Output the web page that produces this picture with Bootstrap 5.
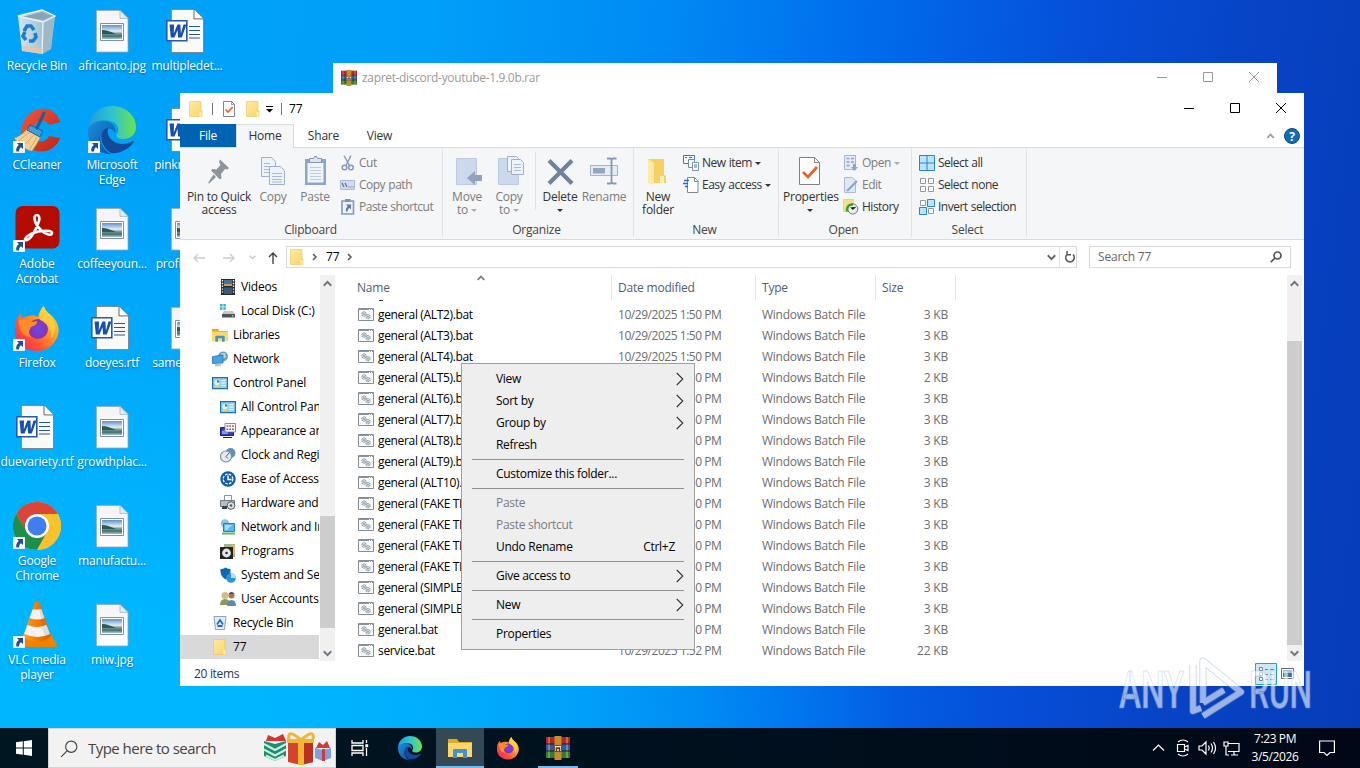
<!DOCTYPE html>
<html lang="en">
<head>
  <meta charset="UTF-8">
  <title>77</title>
  <meta name="viewport" content="width=device-width, initial-scale=1">
  <link href="https://cdn.jsdelivr.net/npm/bootstrap@5.3.3/dist/css/bootstrap.min.css" rel="stylesheet">
  <style>
    body {
      width: 1360px; height: 768px; overflow: hidden; cursor: default;
      font-family: "Open Sans", "Noto Sans", sans-serif; font-size: 12px; line-height: 15px; letter-spacing: -.2px;
      color: #000;
      background: radial-gradient(ellipse 900px 600px at 0 100%, #00b6ff 30%, #00b6ff00),
        linear-gradient(97deg, #00a4f8 0, #009ff9 30%, #008af4 46%, #006cec 60%, #0650da 74%, #0744c6 86%, #063cb8 100%);
    }
    svg { display: block; flex: none; overflow: visible; }

    /* desktop */
    .desk { display: grid; grid-template-rows: repeat(7, 99px); grid-auto-columns: 75px; grid-auto-flow: column; height: 728px; }
    .desk-item { padding: 7px 1px 0 0; color: #fff; text-align: center; text-shadow: 0 1px 2px #0369; white-space: nowrap; letter-spacing: -.19px; }
    .desk-item svg { margin: 0 auto 3px; }

    /* windows */
    .win { position: absolute; background: #fff; }
    .win-rar { left: 333px; top: 63px; width: 944px; height: 40px; color: #999; letter-spacing: -.33px; }
    .win-rar .titlebar { height: 29px; }
    .win-main { left: 180px; top: 93px; width: 1124px; height: 593px; }
    .titlebar { height: 31px; }
    .cap { width: 46px; padding: 0 1px 1px 0; }
    .tabs { height: 23px; border-bottom: 1px solid #dadbdc; box-sizing: content-box; }
    .tab-i { height: 24px; line-height: 24px; text-align: center; color: #333; }
    .tab-file { width: 56px; background: #0063b1; color: #fff; height: 23px; }
    .tab-home { width: 58px; background: #f5f6f7; border: 1px solid #dadbdc; border-bottom: 0; line-height: 22px; }
    .ribbon { height: 92px; background: #f5f6f7; border-bottom: 1px solid #dadbdc; color: #333; }
    .rgroup { border-right: 1px solid #e2e3e4; padding-top: 4px; margin-bottom: 2px; }
    .rbody { height: 70px; }
    .rlabel { text-align: center; color: #444; }
    .big { text-align: center; line-height: 13px; padding-top: 3px; white-space: nowrap; letter-spacing: -.24px; }
    .big svg { margin: 0 auto 3px; }
    .small-row { height: 22px; white-space: nowrap; letter-spacing: -.5px; word-spacing: .6px; }
    .small-row span { padding: 0 0 1px 3px; }
    .dis { color: #7c7c7c; }
    .caret { display: inline-block; border: 3px solid transparent; border-top-color: currentColor; border-bottom: 0; vertical-align: 2px; }
    .small-row .caret { margin-left: 3px; }
    .dis .caret { opacity: .6; }
    .rsep { width: 1px; background: #e0e1e2; height: 58px; }
    .addr { height: 35px; }
    .fieldbox { height: 22px; border: 1px solid #d9d9d9; margin-top: 6px; color: #666; }
    .fieldbox > span:first-child { padding-bottom: 1px; }
    .panes { height: 386px; }
    .tree { width: 139px; margin-right: 1px; overflow: hidden; }
    .tree-row { height: 24px; white-space: nowrap; padding-left: 32px; }
    .tree-row span { padding: 0 0 1px 5px; }
    .tree-row.sub { padding-left: 40px; }
    .tree-row.sel { background: #d9d9d9; }
    .sbar { width: 15px; background: #f0f0f0; }
    .thumb { background: #cdcdcd; width: 15px; }
    .files { width: 952px; overflow: hidden; }
    .fhead { height: 25px; color: #4c607a; padding-left: 20px; position: relative; }
    .fhead > div { border-right: 1px solid #e5e5e5; line-height: 25px; }
    .sortmark { position: absolute; left: 142px; top: 0; color: #777; }
    .frow { height: 21px; white-space: nowrap; color: #6d6d6d; padding-left: 20px; }
    .c-name { width: 257px; padding-left: 2px; }
    .c-date { width: 144px; padding-left: 6px; }
    .c-type { width: 120px; padding-left: 6px; }
    .c-size { width: 80px; padding-left: 6px; }
    .frow .c-size { text-align: right; padding-right: 8px; }
    .frow .c-date { letter-spacing: -.46px; }
    .frow .c-type { letter-spacing: -.27px; }
    .frow .c-name { color: #000; padding-left: 3px; letter-spacing: -.34px; }
    .above { height: 4px; }
    .above i { display: block; width: 4px; height: 1px; background: #333; margin-left: 44px; }
    .status { height: 25px; color: #1e395b; letter-spacing: -.32px; }

    /* context menu */
    .ctx { position: absolute; left: 461px; top: 363px; width: 234px; height: 287px; background: #eee; border: 1px solid #a0a0a0; padding: 4px 10px 0; letter-spacing: -.29px; }
    .ctx-i { height: 22px; padding: 0 0 1px 24px; }
    .ctx-s { height: 7px; padding-top: 3px; }
    .ctx-s i { display: block; height: 1px; background: #919191; }

    /* taskbar */
    .task { position: absolute; left: 0; top: 728px; width: 1360px; height: 40px; background: linear-gradient(90deg, #001722, #000f1d 60%, #000817); color: #fff; }
    .tsearch { width: 288px; height: 40px; background: #f2f2f2; border: 1px solid #cfd4d6; color: #444; font-size: 15px; letter-spacing: -.53px; }
    .tbtn { width: 48px; height: 40px; }
    .tbtn.on { background: #334a56; }
    .tbtn.run { border-bottom: 2px solid #76b9ed; padding-top: 2px; }
    .clock { width: 62px; line-height: 18px; letter-spacing: -.4px; }
    .mark-any { position: absolute; left: 1115px; top: 652px; }
  </style>
</head>
<body>
  <svg width="0" height="0" class="position-absolute">
    <defs>
      <linearGradient id="gPage" x2="0" y2="1"><stop stop-color="#f4f4f4"/><stop offset="1" stop-color="#fdfdfd"/></linearGradient>
      <linearGradient id="gSky" x2="0" y2="1"><stop stop-color="#5d90cc"/><stop offset=".45" stop-color="#e4eff2"/><stop offset=".6" stop-color="#7b9f98"/><stop offset=".8" stop-color="#406e74"/><stop offset="1" stop-color="#a9c6d0"/></linearGradient>
      <linearGradient id="gFold" x2="1" y2="1"><stop stop-color="#ffe9a2"/><stop offset="1" stop-color="#f9d568"/></linearGradient>
      <linearGradient id="gEdge1" x2="1"><stop stop-color="#1d9fd8"/><stop offset=".5" stop-color="#2fc3d0"/><stop offset="1" stop-color="#6be34a"/></linearGradient>
      <linearGradient id="gEdge2" x2="1" y2="1"><stop stop-color="#1b8fe0"/><stop offset="1" stop-color="#0b4fa0"/></linearGradient>
      <linearGradient id="gFox" x1="1" x2="0" y2="1"><stop stop-color="#fff04a"/><stop offset=".4" stop-color="#ff9a24"/><stop offset=".7" stop-color="#ff4d38"/><stop offset="1" stop-color="#e8168b"/></linearGradient>
      <radialGradient id="gFoxIn"><stop stop-color="#6a4be0"/><stop offset="1" stop-color="#8c2fb8"/></radialGradient>
      <linearGradient id="gCone" x2="1"><stop stop-color="#ffa12b"/><stop offset=".5" stop-color="#f47b00"/><stop offset="1" stop-color="#d95f00"/></linearGradient>
      <linearGradient id="gBin" x2="1"><stop stop-color="#dfe9ef"/><stop offset=".55" stop-color="#b5cbd8"/><stop offset="1" stop-color="#8facbf"/></linearGradient>
      <linearGradient id="gRed" x2="1" y2="1"><stop stop-color="#f0583c"/><stop offset="1" stop-color="#bd2414"/></linearGradient>
    </defs>
    <symbol id="link" viewBox="0 0 12 12"><path fill="#fff" stroke="#b7c6d0" stroke-width=".6" d="M0 0h12v12H0z"/><path fill="#1c4f96" d="M4 2h6v6L8 6.200C6.500 7.200 6 8.500 6.200 10.500H3.400C2.600 8 3.700 5.500 5.900 4z"/></symbol>
    <symbol id="bin" viewBox="0 0 48 48"><path fill="url(#gBin)" d="M5 9l24-6 13 6-4 33-9 5-20-3z" opacity=".95"/><path fill="#9db9c8" d="M30 15l12-6-4 33-9 5z"/><path fill="#8aa5b2" d="M8 10l21-5 9 4-8 4z"/><path fill="none" stroke="#eaf3f7" stroke-width="1.300" d="M5 9l24-6 13 6-12 6zM30 15l-1 32"/><path fill="#e8c4a8" d="M10 39l19 2v6l-19-3z" opacity=".8"/><g fill="none" stroke="#1b7fd0" stroke-width="3.600"><path d="M11 24l3-5h4l3 4"/><path d="M22 26l1 4-3 4h-4"/><path d="M13 33l-3-4 2-4"/></g></symbol>
    <symbol id="jpg" viewBox="0 0 48 48"><path fill="url(#gPage)" stroke="#9aa3a8" stroke-width=".8" d="M8.400 3.400H32l8 8V45H8.400z"/><path fill="#e3eef4" stroke="#9fb3c0" stroke-width=".8" d="M32 3.400v8h8z"/><path fill="#fff" stroke="#7c8fb0" d="M12.500 16.500h23v17h-23z"/><path fill="url(#gSky)" d="M14 18h20v14H14z"/><path fill="#2e5a55" d="M14 23c5 0 9 2 14 4H14z"/></symbol>
    <symbol id="doc" viewBox="0 0 48 48"><path fill="#fafafa" stroke="#777" stroke-width=".8" d="M8.400 2.400H31l9.500 9.500V45.500H8.400z"/><path fill="#fff" stroke="#555" stroke-width=".9" d="M31 2.400v9.500h9.500"/><path stroke="#2a5699" stroke-width="1.200" d="M26 19.500h11M26 23.500h11M26 27.500h11M26 31h11"/><path fill="#fff" stroke="#2459ac" stroke-width="1.600" d="M3.800 13.800h20v20h-20z"/><path fill="#174fae" d="M6.500 17.500h4.500l-.2 9 3.600-9h3l.5 9 2.600-9h3l-4.700 13h-3.700l-.6-7.500-3 7.500H7.800z"/></symbol>
    <symbol id="ccl" viewBox="0 0 48 48"><path fill="url(#gRed)" d="M47 16l-11 3c-3-5-9-6-13-2-6 6-4 17 3 18 5 1 8-1 10-5l11 2C43 43 33 47 23 45 11 42 6 32 9 20 12 8 22 1 33 3c7 1 12 6 14 13z"/><path fill="#f3cf96" stroke="#b98c4e" stroke-width=".6" d="M15 22l13 8c-3 6-6 11-9 15C12 44 6 38 1 32c5-1 10-5 14-10z"/><path stroke="#c79a5a" stroke-width=".7" d="M17 26L5 35M21 29l-10 10M24 31l-7 12"/><path fill="#3d9fdc" stroke="#1c5d94" d="M17 19l13 6-3 6-13-7z"/><path stroke="#255b91" stroke-width="3" stroke-linecap="round" d="M24 22l7-15"/></symbol>
    <symbol id="edge" viewBox="0 0 48 48"><path fill="url(#gEdge1)" d="M0 22C2 8 12 0 24 0c14 0 24 10 24 21 0 8-6 12-13 12-5 0-8-2-6-5 3-4 1-12-7-13C12 13 3 18 0 24z"/><path fill="url(#gEdge2)" d="M0 23c4-8 16-11 23-6 4 3 5 6 4 10-2-5-9-6-12-1-5 8 0 18 8 22C10 48-1 38 0 23z"/><path fill="#14489a" d="M14 27c1-3 4-5 6-5-2 8 4 15 13 16 5 0 8-1 12-3 1 0 1 1 1 1-6 8-15 12-23 11-7-4-11-12-9-20z"/></symbol>
    <symbol id="pdf" viewBox="0 0 48 48"><rect x="2.500" y="1" width="44" height="42.500" rx="7" fill="#b30b00"/><path fill="none" stroke="#fff" stroke-width="2.600" stroke-linejoin="round" d="M24 10c-5 0-2 10 4 15 5 5 11 6 11 3 0-4-17-2-23 2-5 3-5 6-2 5 4-1 10-12 12-19 1-3 0-6-2-6z"/></symbol>
    <symbol id="fox" viewBox="0 0 48 48"><path fill="url(#gFox)" d="M3 17c1-3 3-6 5-7l1 4c2-1 4-2 7-2 3-1 7 0 9 1 1-5 3-9 6-11 1 5 5 7 8 10 5 5 8 12 6 19-3 10-11 16-21 16C11 47 1 38 2 26c0-3 0-6 1-9z"/><circle cx="25" cy="25" r="10" fill="url(#gFoxIn)"/><path fill="#ff8b2b" d="M6 16c5-2 11 0 13 2l5-1c1 3-3 5-6 6-2 3-3 7 0 10C9 33 5 24 6 16z"/><path fill="#ffd43e" d="M31 2c0 5 8 9 10 17 2 6 0 12-3 16 1-9-3-15-11-19-1-6 1-11 4-14z" opacity=".75"/></symbol>
    <symbol id="chrome" viewBox="0 0 48 48"><circle cx="24" cy="24" r="24" fill="#f8c22e"/><path fill="#dc4437" d="M3.200 12A24 24 0 0 1 44.800 12H24L14 30z"/><path fill="#1e8e4a" d="M3.200 12A24 24 0 0 0 24 48l10-18-10-6-10 6z"/><path fill="#f8c22e" d="M24 48A24 24 0 0 0 44.800 12H24l10.400 18z"/><circle cx="24" cy="24" r="12" fill="#fff"/><circle cx="24" cy="24" r="9.500" fill="#3f7df0"/></symbol>
    <symbol id="vlc" viewBox="0 0 48 48"><path fill="#f08200" d="M10 33h28l6 11q.5 2-2 2H6q-3 0-2-2z"/><path fill="url(#gCone)" d="M22 1q2-1 4 0l12 34q-6 6-14 6t-14-6z"/><path fill="#f3f3f3" d="M19.600 8.500h8.800l3 8.500q-7 3-14.800 0zM14.500 24q9 4 19 0l3.300 9q-12 6-25.600 0z"/><path fill="#ccc" opacity=".6" d="M26 8.500h2.400l3 8.500-3 1zM29 25.500l4.500-1.500 3.300 9-5 2z"/></symbol>
    <symbol id="rar" viewBox="0 0 24 24"><path fill="#b3242c" d="M0 1h24v7H0z"/><path fill="#3157a6" d="M0 8h24v7H0z"/><path fill="#2e7d32" d="M0 15h24v7H0z"/><path stroke="#e8c869" stroke-width="1.200" d="M3 1v21M21 1v21" opacity=".7"/><path stroke="#1a1a1a" stroke-width="1" d="M0 8h24M0 15h24"/><path fill="#c98a2b" d="M8.500 0h7v24h-7z"/><path fill="#f4efe2" stroke="#6b4b1f" d="M8.500 9.500h7v6h-7z"/><path fill="none" stroke="#4a3412" stroke-width="1.500" d="M10.500 15v-3h3v3"/></symbol>
    <symbol id="fold" viewBox="0 0 16 16"><path fill="url(#gFold)" stroke="#e8c25a" stroke-width=".6" d="M1.500.5h11.500v9.500h1v5.500H1.500z"/><path fill="#ffeeb4" d="M11.500 11h2v4.500h-2z"/></symbol>
    <symbol id="libs" viewBox="0 0 24 24"><path fill="#e5a823" d="M0 3h9l2 3h13v4H0z"/><path fill="#ffd767" d="M0 7h24v14H0z"/><path fill="#3f93d5" d="M5 22v-8q0-1 1-1h12q1 0 1 1v8h-4v-5H9v5z"/></symbol>
    <symbol id="props" viewBox="0 0 16 16"><path fill="#fff" stroke="#777" stroke-width=".9" d="M2.500.5h8l3 3v12h-11z"/><path fill="none" stroke="#777" stroke-width=".7" d="M10.500.5v3h3"/><path fill="none" stroke="#e8622c" stroke-width="1.700" d="M4.500 8.500l2.500 2.500 4.700-5"/></symbol>
    <symbol id="bigprops" viewBox="0 0 32 32"><path fill="#fff" stroke="#808080" d="M5.500 2.500h15l5 5v22h-20z"/><path fill="none" stroke="#808080" d="M20.500 2.500v5h5"/><path fill="none" stroke="#e8622c" stroke-width="2.800" d="M9 17l5 5 9-10"/></symbol>
    <symbol id="pin" viewBox="0 0 32 32"><g transform="translate(1 3)" fill="#8d959c"><path d="M16 1.500l9 8.500-1.500 1.500-2.500-.5-4 5 .5 4-1.500 1.500L7 12.500l1.500-1.500 4 .5 4-4.500-1.500-3z"/><path d="M9.500 16.500l2.500 2.500-7 6.500-1-.5z"/></g></symbol>
    <symbol id="copy" viewBox="0 0 32 32"><g fill="#eef2f9" stroke="#9db0cf"><path d="M4.500 2.500h10l4 4v15h-14z"/><path d="M12.500 11.500h11l4 4v14h-15z"/></g><path stroke="#a9bad6" d="M7 8.500h6M7 11.500h5M7 14.500h5M7 17.500h5M15 18.500h10M15 21.500h10M15 24.500h10M15 27h10"/></symbol>
    <symbol id="paste" viewBox="0 0 32 32"><path fill="#8ea5ca" d="M6 4h21v26H6z"/><path fill="#eff3fa" d="M8.500 8h16v19.500h-16z"/><path fill="#dce3ef" stroke="#8095b9" d="M10.500 7.500v-4h4l1-2h2l1 2h4v4z"/><path stroke="#bccae2" d="M11 12.500h11M11 15.500h11M11 18.500h11M11 21.500h11M11 24.500h11"/></symbol>
    <symbol id="cut" viewBox="0 0 16 16"><g fill="none" stroke="#8499bd"><path stroke-width="1.400" d="M4 .5l5.500 10M11 .5l-5 10"/><circle cx="4.500" cy="12.500" r="2.300" stroke-width="1.500"/><circle cx="11" cy="12.500" r="2.300" stroke-width="1.500"/></g></symbol>
    <symbol id="cpath" viewBox="0 0 16 16"><path fill="#cfdaec" stroke="#aabddb" d="M.5 3.500h14v9H.5z"/><path fill="none" stroke="#5c7299" stroke-width="1.200" d="M2 6l2 4M5 6l2 4M8.500 10h1M10.500 10h1M12.500 10h1"/></symbol>
    <symbol id="pshort" viewBox="0 0 16 16"><path fill="#f0f4fa" stroke="#8098c4" stroke-width="1.600" d="M2 2h11.500v13H2z"/><path fill="#7e93b5" d="M5 0h5.500v3H5z"/><path fill="#5577b8" d="M6 5.500h5v5L9.400 9c-1.500.8-1.800 2-1.700 3.500H6c-.5-2 .1-3.700 1.700-5z"/></symbol>
    <symbol id="moveto" viewBox="0 0 32 32"><path fill="#ccd8ec" stroke="#bccae3" d="M5.500 3.500h20v26h-20z"/><path fill="#92a2ba" d="M31 20v6h-7v4l-8-7 8-7v4z"/></symbol>
    <symbol id="copyto" viewBox="0 0 32 32"><path fill="#ccd8ec" stroke="#bccae3" d="M5.500 3.500h20v26h-20z"/><g fill="#eef2f9" stroke="#9db0cf"><path d="M14.500 1.500h9l3 3v12h-12z"/><path d="M18.500 4.500h9l3 3v12h-12z"/></g><path stroke="#a9bad6" d="M21 9.500h7M21 12.500h7M21 15.500h7"/></symbol>
    <symbol id="del" viewBox="0 0 32 32"><path stroke="#70829e" stroke-width="4.200" d="M5 5.500l23 23M28 5.500l-23 23"/></symbol>
    <symbol id="ren" viewBox="0 0 32 32"><path fill="#e6ecf5" stroke="#a3b4cf" d="M2.500 10.500h27v10h-27z"/><path fill="#93a5c1" d="M5 13h12v5.500H5z"/><path fill="none" stroke="#8598b5" stroke-width="1.800" d="M19 3.500h3q1.500 0 1.500 2v21q0 2-1.500 2h-3M28.500 3.500h-3q-2 0-2 2v21q0 2 2 2h3"/></symbol>
    <symbol id="newf" viewBox="0 0 32 32"><path fill="#f7d063" d="M6 4h16v16l2 1v7H6z"/><path fill="#ffe9a6" d="M6 4l6 4v22l-6-2z"/><path fill="#fff0be" d="M18 21h4v7h-4z"/></symbol>
    <symbol id="newitem" viewBox="0 0 16 16"><g fill="#f2f7fc" stroke="#3c7ab5" ><path d="M.5.500h11v8H.500z"/><path fill="#fff" stroke="#6b8fb3" d="M5.500 4.500h6v8h-6z"/><path fill="#fff" stroke="#7f93a8" d="M9.500 7.500h6v8h-6z"/></g><path stroke="#3c7ab5" d="M2 2.500h2M6 2.500h3M11 10h3M11 12h3"/></symbol>
    <symbol id="easy" viewBox="0 0 16 16"><path fill="#fff" stroke="#808890" d="M4.500.5h7l3.500 3.500v11.500H4.500z"/><path fill="none" stroke="#808890" d="M11.500.5v4h4"/><path stroke="#1f6fc0" stroke-width="1.500" d="M1 3.500h5M0 6.500h5M2 9.500h3"/></symbol>
    <symbol id="openi" viewBox="0 0 16 16"><path fill="#e3eaf5" stroke="#a3b6d4" d="M1.500.5h11v14h-11z"/><path stroke="#8ea3c6" stroke-width="1.500" d="M3.500 3.500h3M3.500 7h3M3.500 10.500h3M8 3.500h3M8 7h3"/><path fill="#8ea3c6" d="M10 9h3v3h2l-3.500 4L8 12h2z"/></symbol>
    <symbol id="edit" viewBox="0 0 16 16"><path fill="#dfe7f3" stroke="#a9bbd8" d="M1.500.5h8l3 3v12h-11z"/><path stroke="#8ea3c6" stroke-width="2.200" d="M4 14L14 4"/></symbol>
    <symbol id="hist" viewBox="0 0 16 16"><path fill="#f9df87" stroke="#e4bf55" stroke-width=".6" d="M.5.500h10v12h-10z"/><circle cx="9.800" cy="10" r="5" fill="#e9eef0" stroke="#6b7b80"/><path fill="none" stroke="#28a428" stroke-width="2.400" d="M4 12.500c-1-4 2-7.500 6-7"/><path stroke="#555" stroke-width="1" d="M7.500 8.500l2.300 2L13 8"/></symbol>
    <symbol id="sall" viewBox="0 0 16 16"><path fill="#bfe3fb" stroke="#1f86d9" d="M.5.500h15v15H.500zM8 0v16M0 8h16"/></symbol>
    <symbol id="snone" viewBox="0 0 16 16"><path fill="#fff" stroke="#999" d="M1.500 1.500h5v5h-5zM9.500 1.500h5v5h-5zM1.500 9.500h5v5h-5zM9.500 9.500h5v5h-5z"/></symbol>
    <symbol id="sinv" viewBox="0 0 16 16"><path fill="#fff" stroke="#999" d="M1.500 1.500h5v5h-5zM9.500 9.500h5v5h-5z"/><path fill="#bfe3fb" stroke="#1f86d9" d="M8.500.500h7v7h-7zM.500 8.500h7v7h-7z"/></symbol>
    <symbol id="video" viewBox="0 0 16 16"><path fill="#2b2b2b" d="M1 0h14v16H1z"/><path fill="#4b6f9c" d="M4 1h8v6H4z"/><path fill="#c2a04c" d="M4 5h8v2H4z"/><path fill="#36587f" d="M4 8.500h8V15H4z"/><path stroke="#eee" stroke-width="1.400" stroke-dasharray="1.400 1.400" d="M2.500 1v14M13.500 1v14"/></symbol>
    <symbol id="disk" viewBox="0 0 16 16"><path fill="#28b4d8" d="M0 1h2.500v2.500H0zM3.300 1h2.500v2.500H3.300zM0 4.200h2.500v2.500H0zM3.300 4.200h2.500v2.500H3.300z"/><path fill="#c4c9cc" d="M4 8h9l2 3H2z"/><path fill="#4d5356" d="M2 11h13v3.500H2z"/><path fill="#5ff07a" d="M12 12h1.500v1.500H12z"/></symbol>
    <symbol id="net" viewBox="0 0 16 16"><circle cx="11" cy="5.500" r="5" fill="#6f9fc0"/><path fill="#b9d8c4" d="M9 2l4 0 1 4-3 2z"/><path fill="#41a5df" stroke="#2a75a8" stroke-width=".8" d="M.5 5.500l10.500-1.500v8L.5 12.500z"/><path fill="#b8c5cc" d="M3 13l6-.5v2.500l-6 .5z"/></symbol>
    <symbol id="cpl" viewBox="0 0 16 16"><path fill="#8fd3f5" stroke="#1f6fb5" stroke-width="1.200" d="M.6 2.600h14.800v11H.6z"/><circle cx="5" cy="7.500" r="2.600" fill="#e9f7ff"/><path fill="#2a78c2" d="M5 5v2.500h2.600A2.600 2.600 0 0 0 5 5z"/><path fill="#f2d24a" d="M3 10.500h4V12H3z"/><path stroke="#fff" stroke-width="1.200" d="M9.500 5.500h4M9.500 8h4M9.500 10.500h4"/></symbol>
    <symbol id="appear" viewBox="0 0 16 16"><path fill="#2d3fd0" stroke="#18227e" d="M.5 4.500h13v8H.5z"/><path fill="#7aa0ee" d="M2 8l6-2v5H2z"/><path fill="#fff" stroke="#8a6a5a" stroke-width=".8" d="M5 .5h10.500v8.500H5z"/><path stroke="#b0512f" stroke-width="1.600" stroke-dasharray="1.800 1" d="M6.500 3h8"/><path stroke="#6a5a9a" stroke-width="1.600" stroke-dasharray="1.800 1" d="M6.500 6.200h8"/><path stroke="#223" d="M3 14.500h9"/></symbol>
    <symbol id="clk" viewBox="0 0 16 16"><circle cx="10.500" cy="6" r="5" fill="#5d93b8"/><circle cx="6" cy="9.500" r="5.500" fill="#e4ebee" stroke="#87939a" stroke-width="1.200"/><path fill="none" stroke="#456" d="M9 6l-3 3.500 2 2"/></symbol>
    <symbol id="ease" viewBox="0 0 16 16"><circle cx="8" cy="8" r="7.700" fill="#0f5cab"/><circle cx="8" cy="8" r="4.800" fill="none" stroke="#fff" stroke-width="1.300" stroke-dasharray="2.600 1.200"/><path fill="none" stroke="#fff" stroke-width="1.500" d="M8 4.500v4h3.500"/></symbol>
    <symbol id="print" viewBox="0 0 16 16"><path fill="#fff" stroke="#8a949a" d="M4.500.5h7v6h-7z"/><path fill="#b6bec3" stroke="#6e787e" d="M.5 5.500h14v6H.500z"/><circle cx="11" cy="10.500" r="3.800" fill="#d8dee1" stroke="#555f66"/><circle cx="11" cy="10.500" r="1.200" fill="#555"/><path fill="#394349" d="M2 11h5v3H2z"/></symbol>
    <symbol id="neti" viewBox="0 0 16 16"><circle cx="5" cy="4.500" r="4.200" fill="#8cc3e0"/><path fill="#5cb8e8" stroke="#2583b8" d="M3.500 4.500h11v8h-11z"/><path fill="#a5ddf6" d="M5 6h7l-5 5H5z"/><path fill="#53b86a" d="M2 13.500h13v2H2z"/></symbol>
    <symbol id="prog" viewBox="0 0 16 16"><path fill="#a5b68c" d="M4 1h11v13H4z"/><path fill="#e0b95a" d="M11 2h4v9h-4z"/><path fill="#222" d="M0 4h13v12H0z"/><circle cx="6.500" cy="10" r="4.400" fill="#dfe5e8"/><circle cx="6.500" cy="10" r="1.300" fill="#333"/></symbol>
    <symbol id="shld" viewBox="0 0 16 16"><path fill="#0e66b4" d="M.5 2q3 0 5-1.500Q8 2 10.500 2c.5 6-2 9-5 10.500C2 10 0 7 .5 2z"/><circle cx="11" cy="11" r="4.800" fill="#2597e0"/><path fill="#b7e2fa" d="M11 6.200A4.800 4.800 0 0 1 15.800 11H11z"/></symbol>
    <symbol id="usr" viewBox="0 0 16 16"><circle cx="5" cy="4.500" r="3.500" fill="#d3bd84"/><path fill="#8a9c50" d="M0 14q0-6 5-6t5 6z"/><circle cx="11.500" cy="4.500" r="3" fill="#a8764c"/><path fill="#3d4b68" d="M8.500 3q3-4 6 0z"/><path fill="#5e87b8" d="M7 15q0-6 4.500-6t4.500 6z"/></symbol>
    <symbol id="rbin" viewBox="0 0 16 16"><path fill="#e3edf3" stroke="#8ba3b2" d="M2 1.500h12l-1.500 13h-9z"/><path fill="none" stroke="#1b6fc0" stroke-width="1.800" d="M5 9.500L8 5l3 4.500M5.500 11h5"/></symbol>
    <symbol id="bat" viewBox="0 0 16 14"><path fill="#fbfbfb" stroke="#858d93" d="M.5.500h15v12H.500z"/><path stroke="#8c9499" d="M1 1.500h10M12 1.500h1M14 1.500h1"/><g fill="none" stroke="#8b949a" stroke-width="1.100"><circle cx="6" cy="6" r="2.100" stroke-dasharray="1.600 .4"/><circle cx="10" cy="8.700" r="2.100" stroke="#7f9db8" stroke-dasharray="1.600 .4"/><circle cx="6" cy="6" r=".4"/><circle cx="10" cy="8.700" r=".4"/></g></symbol>
    <symbol id="min" viewBox="0 0 10 10"><path stroke="currentColor" d="M0 5.500h10"/></symbol>
    <symbol id="max" viewBox="0 0 10 10"><path fill="none" stroke="currentColor" d="M.5.500h9v9h-9z"/></symbol>
    <symbol id="cls" viewBox="0 0 10 10"><path stroke="currentColor" d="M0 0l10 10M10 0L0 10"/></symbol>
    <symbol id="up" viewBox="0 0 8 6"><path fill="none" stroke="currentColor" stroke-width="1.700" d="M.7 5L4 1.500 7.300 5"/></symbol>
    <symbol id="down" viewBox="0 0 8 6"><path fill="none" stroke="currentColor" stroke-width="1.700" d="M.7 1L4 4.500 7.300 1"/></symbol>
    <symbol id="rt" viewBox="0 0 8 14"><path fill="none" stroke="#333" stroke-width="1.100" d="M.8 1l6 6-6 6"/></symbol>
    <symbol id="arr" viewBox="0 0 12 10"><path fill="none" stroke="currentColor" stroke-width="1.400" d="M12 5H1M5 1L1 5l4 4"/></symbol>
    <symbol id="glass" viewBox="0 0 16 16"><circle cx="10" cy="6" r="5" fill="none" stroke="currentColor"/><path stroke="currentColor" d="M6.500 9.500L1 15"/></symbol>
  </svg>

  <div class="desk" id="desk"></div>

  <div class="win win-rar d-flex align-items-start">
    <div class="d-flex align-items-center flex-grow-1 ps-2 titlebar" data-i="rar,16,16"><span style="padding-left:5px">zapret-discord-youtube-1.9.0b.rar</span></div>
    <div class="d-flex titlebar caps"></div>
  </div>

  <div class="win win-main">
    <div class="d-flex titlebar">
      <div class="d-flex align-items-center flex-grow-1 ps-2" id="quick"></div>
      <div class="d-flex caps"></div>
    </div>
    <div class="d-flex tabs">
      <div class="tab-i tab-file">File</div>
      <div class="tab-i tab-home">Home</div>
      <div class="tab-i" style="width:59px">Share</div>
      <div class="tab-i" style="width:53px">View</div>
      <div class="ms-auto d-flex align-items-center pe-1" style="gap:9px" id="help"></div>
    </div>
    <div class="d-flex ribbon" id="ribbon"></div>

    <div class="d-flex addr">
      <div class="d-flex align-items-center" style="width:106px;padding-left:13px" id="arrows"></div>
      <div class="fieldbox d-flex align-items-center" style="width:791px;padding-left:2px" id="path"></div>
      <div class="fieldbox d-flex align-items-center justify-content-between px-2" style="width:202px;margin-left:12px" id="find"><span>Search 77</span></div>
    </div>

    <div class="d-flex panes">
      <div class="tree" id="tree"></div>
      <div class="sbar d-flex flex-column align-items-center text-secondary" id="sb1"></div>
      <div class="files">
        <div class="fhead d-flex" id="fhead"><div class="c-name">Name</div><div class="c-date">Date modified</div><div class="c-type">Type</div><div class="c-size">Size</div></div>
        <div id="rows"><div class="above"><i></i></div></div>
      </div>
      <div class="sbar d-flex flex-column align-items-center text-secondary" id="sb2"></div>
    </div>
    <div class="status d-flex align-items-center justify-content-between">
      <span style="padding-left:14px">20 items</span>
      <div class="d-flex align-items-center" style="padding-right:5px">
        <svg width="22" height="22"><path fill="#cbe8f6" stroke="#26a0da" d="M.5.500h21v21H.500z"/><path fill="#fff" stroke="#70898f" d="M4.500 4.500h3v3h-3zM4.500 9.500h3v3h-3zM4.500 14.500h3v3h-3z"/><path stroke="#70898f" d="M10 6.500h3M15 6.500h4M10 11.500h3M15 11.500h4M10 16.500h3M15 16.500h4"/></svg>
        <svg width="22" height="22"><path fill="#fff" stroke="#667" d="M4.500 5.500h12v10h-12z"/><path fill="#9cc6e4" d="M6 7h9v4H6z"/><path fill="#2d6b9c" d="M6 10h9v4H6z"/></svg>
      </div>
    </div>
  </div>

  <div class="ctx" id="ctx"></div>

  <svg class="mark-any" width="200" height="70" font-family="Roboto" font-weight="500" font-size="52" opacity=".6">
    <g fill="#fff" stroke="#9fb0d0" stroke-width=".7">
      <text x="4" y="56" textLength="65" lengthAdjust="spacingAndGlyphs">ANY</text>
      <text x="134" y="56" textLength="63" lengthAdjust="spacingAndGlyphs">RUN</text>
    </g>
    <g fill="none" stroke-linejoin="round">
      <g stroke="#9fb0d0" stroke-width="7"><path d="M78 13v46l8-3"/><path d="M88 51V9l38 31-38 24"/><path d="M88 51l21-13"/></g>
      <g stroke="#fff" stroke-width="5.500"><path d="M78 13v46l8-3"/><path d="M88 51V9l38 31-38 24"/><path d="M88 51l21-13"/></g>
    </g>
  </svg>

  <div class="task d-flex">
    <div class="tbtn d-flex align-items-center justify-content-center"><svg width="16" height="16" fill="#fff"><path d="M0 2.300L6.800 1.300V7.500H0zM7.800 1.200L16 0v7.500H7.800zM0 8.500h6.800v6.300L0 13.800zM7.800 8.500H16V16l-8.200-1.200z"/></svg></div>
    <div class="tsearch d-flex align-items-center" style="padding-left:10px">
      <svg width="18" height="18" viewBox="-1 -1 18 18" style="margin-right:11px"><use href="#glass" stroke="#222"/></svg>
      <span>Type here to search</span>
      <svg width="71" height="36" class="ms-auto">
        <path fill="#d5342f" d="M2 11l2-6 7 3 8-4 3 7z"/><path fill="#1e8c70" d="M0 11l11 3 11-3v15l-11 5-11-5z"/><path stroke="#c9efe0" stroke-width="2" fill="none" d="M0 14l11 6 11-6M0 19.500l11 6 11-6M2 25.500l9 4.500 9-4.500"/>
        <path fill="#d6432c" d="M24 11h25v21l-12 3-13-3z"/><path fill="#b93121" d="M37 13l12-2v21l-12 3z"/><path fill="#f2b535" d="M34 11h6v24h-6zM23 9h27v4H23z"/><path fill="none" stroke="#f2b535" stroke-width="3" d="M37 10q-14-12-12-1M37 10q14-12 12-1"/>
        <path fill="#7d9fe0" d="M51 18l8 2 8-2v10l-8 3-8-3z"/><path fill="#d23a3a" d="M52 18l3-6 4 3 4-4 3 7zM58 19h3v12h-3z"/>
      </svg>
    </div>
    <div class="tbtn d-flex align-items-center justify-content-center"><svg width="18" height="16" fill="none" stroke="#fff" stroke-width="1.300"><path d="M1 0v3h11V0M1 16v-3h11v3M1 5.500h11v5H1zM15.500 0v3M15.500 8v8"/><path fill="#fff" d="M15 5h1.500v1.500H15z"/></svg></div>
    <div class="d-flex ps-1" id="apps"></div>
    <div class="ms-auto d-flex align-items-center">
      <svg width="90" height="20" fill="none" stroke="#fff" stroke-width="1.200" style="margin-right:2px">
        <path d="M1 12.500L6.500 7l5.500 5.500M26 4q5-4 10 0M26 16q5 4 10 0M25.500 6.500h7v7h-7zM32.500 9l3.500-1.500v5L32.500 11"/>
        <path d="M47 8h3l4-4v12l-4-4h-3zM56.500 7.500q1.500 2.500 0 5M59 5.500q3 4.500 0 9M61.500 4q4 6 0 12M76 5.500h11v8H76M79 17h7M82 14v3M72 4h4v4h-4zM74 8v9h3"/>
      </svg>
      <div class="clock text-center">7:23 PM<br>3/5/2026</div>
      <svg width="16" height="16" fill="none" stroke="#fff" stroke-width="1.200" style="margin:0 25px 0 13px"><path d="M.6 1h14.800v11.500H11l-3 3-3-3H.6z"/></svg>
    </div>
  </div>

  <script src="https://cdn.jsdelivr.net/npm/bootstrap@5.3.3/dist/js/bootstrap.bundle.min.js"></script>
  <script>
    const byId = id => document.getElementById(id);
    const icon = (name, w = 16, h = w, cls = '') => `<svg width="${w}" height="${h}" class="${cls}"><use href="#${name}"/></svg>`;

    // desktop, column by column
    const desk = [
      ['bin', 'Recycle Bin'], ['ccl', 'CCleaner', 1], ['pdf', 'Adobe<br>Acrobat', 1], ['fox', 'Firefox', 1], ['doc', 'duevariety.rtf'], ['chrome', 'Google<br>Chrome', 1], ['vlc', 'VLC media<br>player', 1],
      ['jpg', 'africanto.jpg'], ['edge', 'Microsoft<br>Edge', 1], ['jpg', 'coffeeyoun...'], ['doc', 'doeyes.rtf'], ['jpg', 'growthplac...'], ['jpg', 'manufactu...'], ['jpg', 'miw.jpg'],
      ['doc', 'multipledet...'], ['doc', 'pinkrules.rtf'], ['jpg', 'profitab.jpg'], ['jpg', 'samearts.jpg']
    ];
    byId('desk').innerHTML = desk.map(([name, label, link]) => `
      <div class="desk-item">
        <svg width="48" height="48"><use href="#${name}"/>${link ? '<use href="#link" y="35" width="12" height="12"/>' : ''}</svg>
        ${label}
      </div>`).join('');

    document.querySelectorAll('.caps').forEach(el => {
      el.innerHTML = ['min', 'max', 'cls'].map(n => `<div class="cap d-flex align-items-center justify-content-center">${icon(n, 10)}</div>`).join('');
    });
    document.querySelectorAll('[data-i]').forEach(el => {
      const [n, w, h] = el.dataset.i.split(',');
      el.insertAdjacentHTML('afterbegin', icon(n, w, h));
    });

    const bar = '<span class="border-start border-secondary" style="height:12px"></span>';
    byId('quick').innerHTML = icon('fold', 16, 16, 'me-2') + bar + icon('props', 16, 16, 'ms-2') + icon('fold', 16, 16, 'ms-2')
      + '<svg width="8" height="8" style="margin:2px 7px 0 5px"><path d="M0 .500h7" stroke="#000"/><path d="M0 3h7L3.500 6.500z"/></svg>' + bar + '<span style="padding-left:7px">77</span>';
    byId('help').innerHTML = `<span style="color:#999">${icon('up', 9, 6)}</span><svg width="16" height="16"><circle cx="8" cy="8" r="7.500" fill="#0f6cbd" stroke="#084a86"/><text x="8" y="12.500" text-anchor="middle" fill="#fff" font-size="12" font-weight="700">?</text></svg>`;

    // ribbon
    const big = (name, label, w, dis) => `<div class="big ${dis ? 'dis' : ''}" style="width:${w}px">${icon(name, 32)}${label}</div>`;
    const rows = (list, pl) => `<div style="padding-left:${pl}px">` + list.map(([n, t, dis, car]) =>
      `<div class="small-row d-flex align-items-center ${dis ? 'dis' : ''}">${icon(n, 16)}<span>${t}</span>${car ? '<i class="caret"></i>' : ''}</div>`).join('') + '</div>';
    const group = (w, pl, label, body) => `<div class="rgroup" style="width:${w}px"><div class="rbody d-flex" style="padding-left:${pl}px">${body}</div><div class="rlabel" style="padding-right:${w === 263 ? 1 : 3}px">${label}</div></div>`;
    const caret = '<i class="caret"></i>';
    byId('ribbon').innerHTML =
      group(263, 6, 'Clipboard', big('pin', 'Pin to Quick<br>access', 66) + big('copy', 'Copy', 42, 1) + big('paste', 'Paste', 42, 1)
        + rows([['cut', 'Cut', 1], ['cpath', 'Copy path', 1], ['pshort', 'Paste shortcut', 1]], 4)) +
      group(191, 3, 'Organize', big('moveto', 'Move<br>to ' + caret, 42, 1) + big('copyto', 'Copy<br>to ' + caret, 42, 1)
        + '<div class="rsep" style="margin:0 4px 0 5px"></div>' + big('del', 'Delete<br>' + caret, 40) + big('ren', 'Rename', 48, 1)) +
      group(145, 3, 'New', big('newf', 'New<br>folder', 42) + rows([['newitem', 'New item', 0, 1], ['easy', 'Easy access', 0, 1]], 4)) +
      group(133, 4, 'Open', big('bigprops', 'Properties<br>' + caret, 54) + rows([['openi', 'Open', 1, 1], ['edit', 'Edit', 1], ['hist', 'History']], 6)) +
      group(115, 7, 'Select', rows([['sall', 'Select all'], ['snone', 'Select none'], ['sinv', 'Invert selection']], 0));

    byId('arrows').innerHTML = `<span style="color:#ccc">${icon('arr', 12, 10)}</span><span style="color:#ccc;transform:scaleX(-1);margin-left:18px">${icon('arr', 12, 10)}</span>
      <span style="color:#ccc;margin-left:14px">${icon('down', 7, 5)}</span><span style="color:#444;transform:rotate(90deg);margin-left:11px">${icon('arr', 12, 10)}</span>`;
    const chev = '<svg width="5" height="8"><path fill="none" stroke="#555" stroke-width="1.500" d="M1 1l3 3-3 3"/></svg>';
    byId('path').innerHTML = icon('fold', 16, 16) + `<span style="padding-left:7px">${chev}</span><span class="text-black" style="padding:0 8px 1px 9px">77</span>${chev}`
      + `<span class="ms-auto" style="padding-right:3px">${icon('down', 9, 7)}</span><span class="border-start h-100 me-1"></span><svg width="12" height="12" fill="none" stroke="#555" stroke-width="1.500"><path d="M3 3.500a4.300 4.300 0 1 0 6 0M3 0v3.800h4"/></svg>`;
    byId('find').insertAdjacentHTML('beforeend', '<svg width="12" height="12" fill="none" stroke="#555" stroke-width="1.700"><circle cx="7.500" cy="4.500" r="3.500"/><path d="M5 7L.8 11.200"/></svg>');

    const tree = [
      ['video', 'Videos', 1], ['disk', 'Local Disk (C:)', 1], ['libs', 'Libraries'], ['net', 'Network'], ['cpl', 'Control Panel'],
      ['cpl', 'All Control Panel Items', 1], ['appear', 'Appearance and Personalization', 1], ['clk', 'Clock and Region', 1], ['ease', 'Ease of Access', 1],
      ['print', 'Hardware and Sound', 1], ['neti', 'Network and Internet', 1], ['prog', 'Programs', 1], ['shld', 'System and Security', 1],
      ['usr', 'User Accounts', 1], ['rbin', 'Recycle Bin'], ['fold', '77']
    ];
    byId('tree').innerHTML = tree.map(([n, t, sub], k) =>
      `<div class="tree-row d-flex align-items-center ${sub ? 'sub' : ''} ${k === 15 ? 'sel' : ''}">${icon(n, 16)}<span>${t}</span></div>`).join('');

    const scroll = (id, top, gap, h) => {
      byId(id).innerHTML = `<div style="height:${top}px;padding-top:${top - 12}px">${icon('up', 9, 7)}</div><div style="height:${gap}px"></div><div class="thumb" style="height:${h}px"></div><div class="mt-auto pb-1">${icon('down', 9, 7)}</div>`;
    };
    scroll('sb1', 17, 224, 112);
    scroll('sb2', 17, 49, 304);

    const files = ['general (ALT2).bat', 'general (ALT3).bat', 'general (ALT4).bat', 'general (ALT5).bat', 'general (ALT6).bat', 'general (ALT7).bat',
      'general (ALT8).bat', 'general (ALT9).bat', 'general (ALT10).bat', 'general (FAKE TLS AUTO ALT).bat', 'general (FAKE TLS AUTO ALT2).bat',
      'general (FAKE TLS AUTO ALT3).bat', 'general (FAKE TLS AUTO).bat', 'general (SIMPLE FAKE ALT).bat', 'general (SIMPLE FAKE).bat', 'general.bat', 'service.bat'];
    byId('rows').insertAdjacentHTML('beforeend', files.map((f, k) => `
      <div class="frow d-flex align-items-center">
        <div class="c-name d-flex align-items-center">${icon('bat', 16, 14)}<span style="padding-left:4px">${f}</span></div>
        <div class="c-date">${k === 16 ? '10/29/2025 1:52 PM' : '10/29/2025 1:50 PM'}</div>
        <div class="c-type">Windows Batch File</div>
        <div class="c-size">${k === 16 ? '22 KB' : k === 3 ? '2 KB' : '3 KB'}</div>
      </div>`).join(''));
    byId('fhead').insertAdjacentHTML('beforeend', `<span class="sortmark">${icon('up', 8, 6)}</span>`);

    // '-' is a separator, '>' marks a submenu
    const menu = [['View', '>'], ['Sort by', '>'], ['Group by', '>'], ['Refresh'], '-', ['Customize this folder...'], '-', ['Paste', '', 1], ['Paste shortcut', '', 1],
      ['Undo Rename', 'Ctrl+Z'], '-', ['Give access to', '>'], '-', ['New', '>'], '-', ['Properties']];
    byId('ctx').innerHTML = menu.map(m => m === '-' ? '<div class="ctx-s"><i></i></div>' :
      `<div class="ctx-i d-flex align-items-center justify-content-between ${m[2] ? 'dis' : ''}"><span>${m[0]}</span>${m[1] === '>' ? icon('rt', 8, 14) : `<span style="padding-right:9px">${m[1] || ''}</span>`}</div>`).join('');

    byId('apps').innerHTML = [['edge', 24, 'pe-1'], ['libs', 24, 'on run'], ['fox', 24], ['rar', 24, 'run']].map(([n, w, c]) =>
      `<div class="tbtn d-flex align-items-center justify-content-center ${c || ''}" ${n === 'rar' ? 'style="width:40px;margin-left:6px"' : ''}>${icon(n, w)}</div>`).join('');
  </script>
</body>
</html>
